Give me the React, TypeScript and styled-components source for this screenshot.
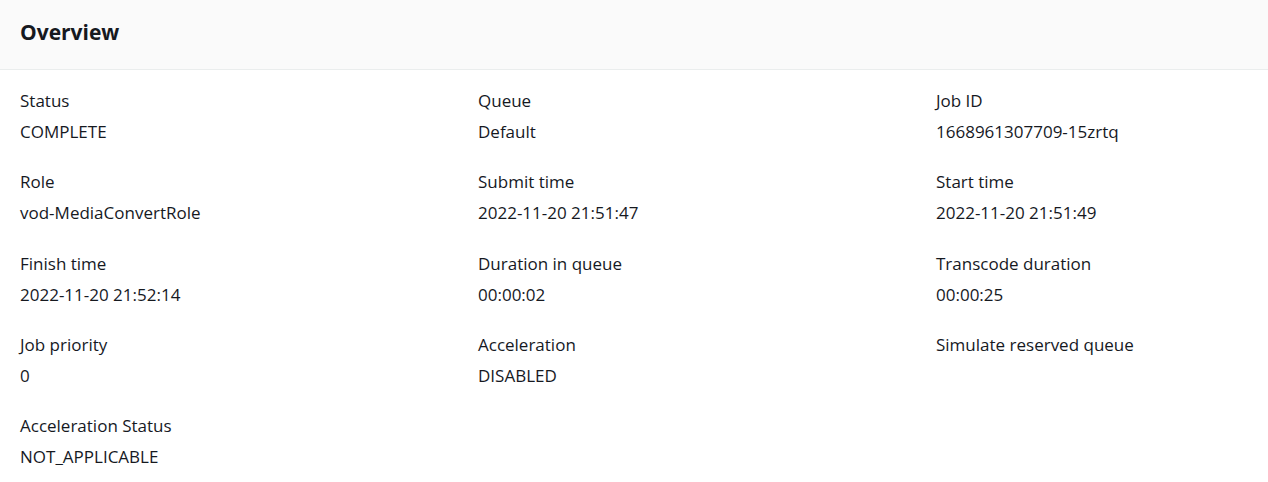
import React from 'react'
import styled, { createGlobalStyle } from 'styled-components';

const GlobalStyle = createGlobalStyle`
  html, body {
    margin: 0;
    padding: 0;
    background: #ffffff;
  }
  body {
    font-family: "Open Sans", "Noto Sans", Arial, sans-serif;
    color: #16191f;
  }
`;

interface Field {
  label: string;
  value?: string;
}

const fields: Field[] = [
  { label: 'Status', value: 'COMPLETE' },
  { label: 'Queue', value: 'Default' },
  { label: 'Job ID', value: '1668961307709-15zrtq' },
  { label: 'Role', value: 'vod-MediaConvertRole' },
  { label: 'Submit time', value: '2022-11-20 21:51:47' },
  { label: 'Start time', value: '2022-11-20 21:51:49' },
  { label: 'Finish time', value: '2022-11-20 21:52:14' },
  { label: 'Duration in queue', value: '00:00:02' },
  { label: 'Transcode duration', value: '00:00:25' },
  { label: 'Job priority', value: '0' },
  { label: 'Acceleration', value: 'DISABLED' },
  { label: 'Simulate reserved queue' },
  { label: 'Acceleration Status', value: 'NOT_APPLICABLE' },
];

const App: React.FC = () => {
  return (
    <>
      <GlobalStyle />
      <Card>
        <Header>
          <h2 className='title'>Overview</h2>
        </Header>
        <Grid>
          {fields.map((f) => (
            <Item key={f.label}>
              <p className='label'>{f.label}</p>
              <p className='value'>{f.value ?? ''}</p>
            </Item>
          ))}
        </Grid>
      </Card>
    </>
  )
}

const Card = styled.div`
  width: 100%;
  overflow: hidden;
  background: #fff;
`;

const Header = styled.div`
  height: 70px;
  box-sizing: border-box;
  display: flex;
  align-items: center;
  padding: 0 20px 5px;
  background: #fafafa;
  border-bottom: 1px solid #eaeded;
  .title{
    margin: 0;
    font-size: 21px;
    font-weight: 700;
    line-height: 28px;
    color: #16191f;
  }
`;

const Grid = styled.div`
  display: grid;
  grid-template-columns: repeat(3, 458px);
  row-gap: 27.25px;
  padding: 19px 0 20px 20px;
`;

const Item = styled.div`
  display: flex;
  flex-direction: column;
  gap: 8px;
  .label, .value{
    margin: 0;
    font-size: 17px;
    line-height: 23px;
    color: #16191f;
    white-space: nowrap;
  }
`;

export default App
